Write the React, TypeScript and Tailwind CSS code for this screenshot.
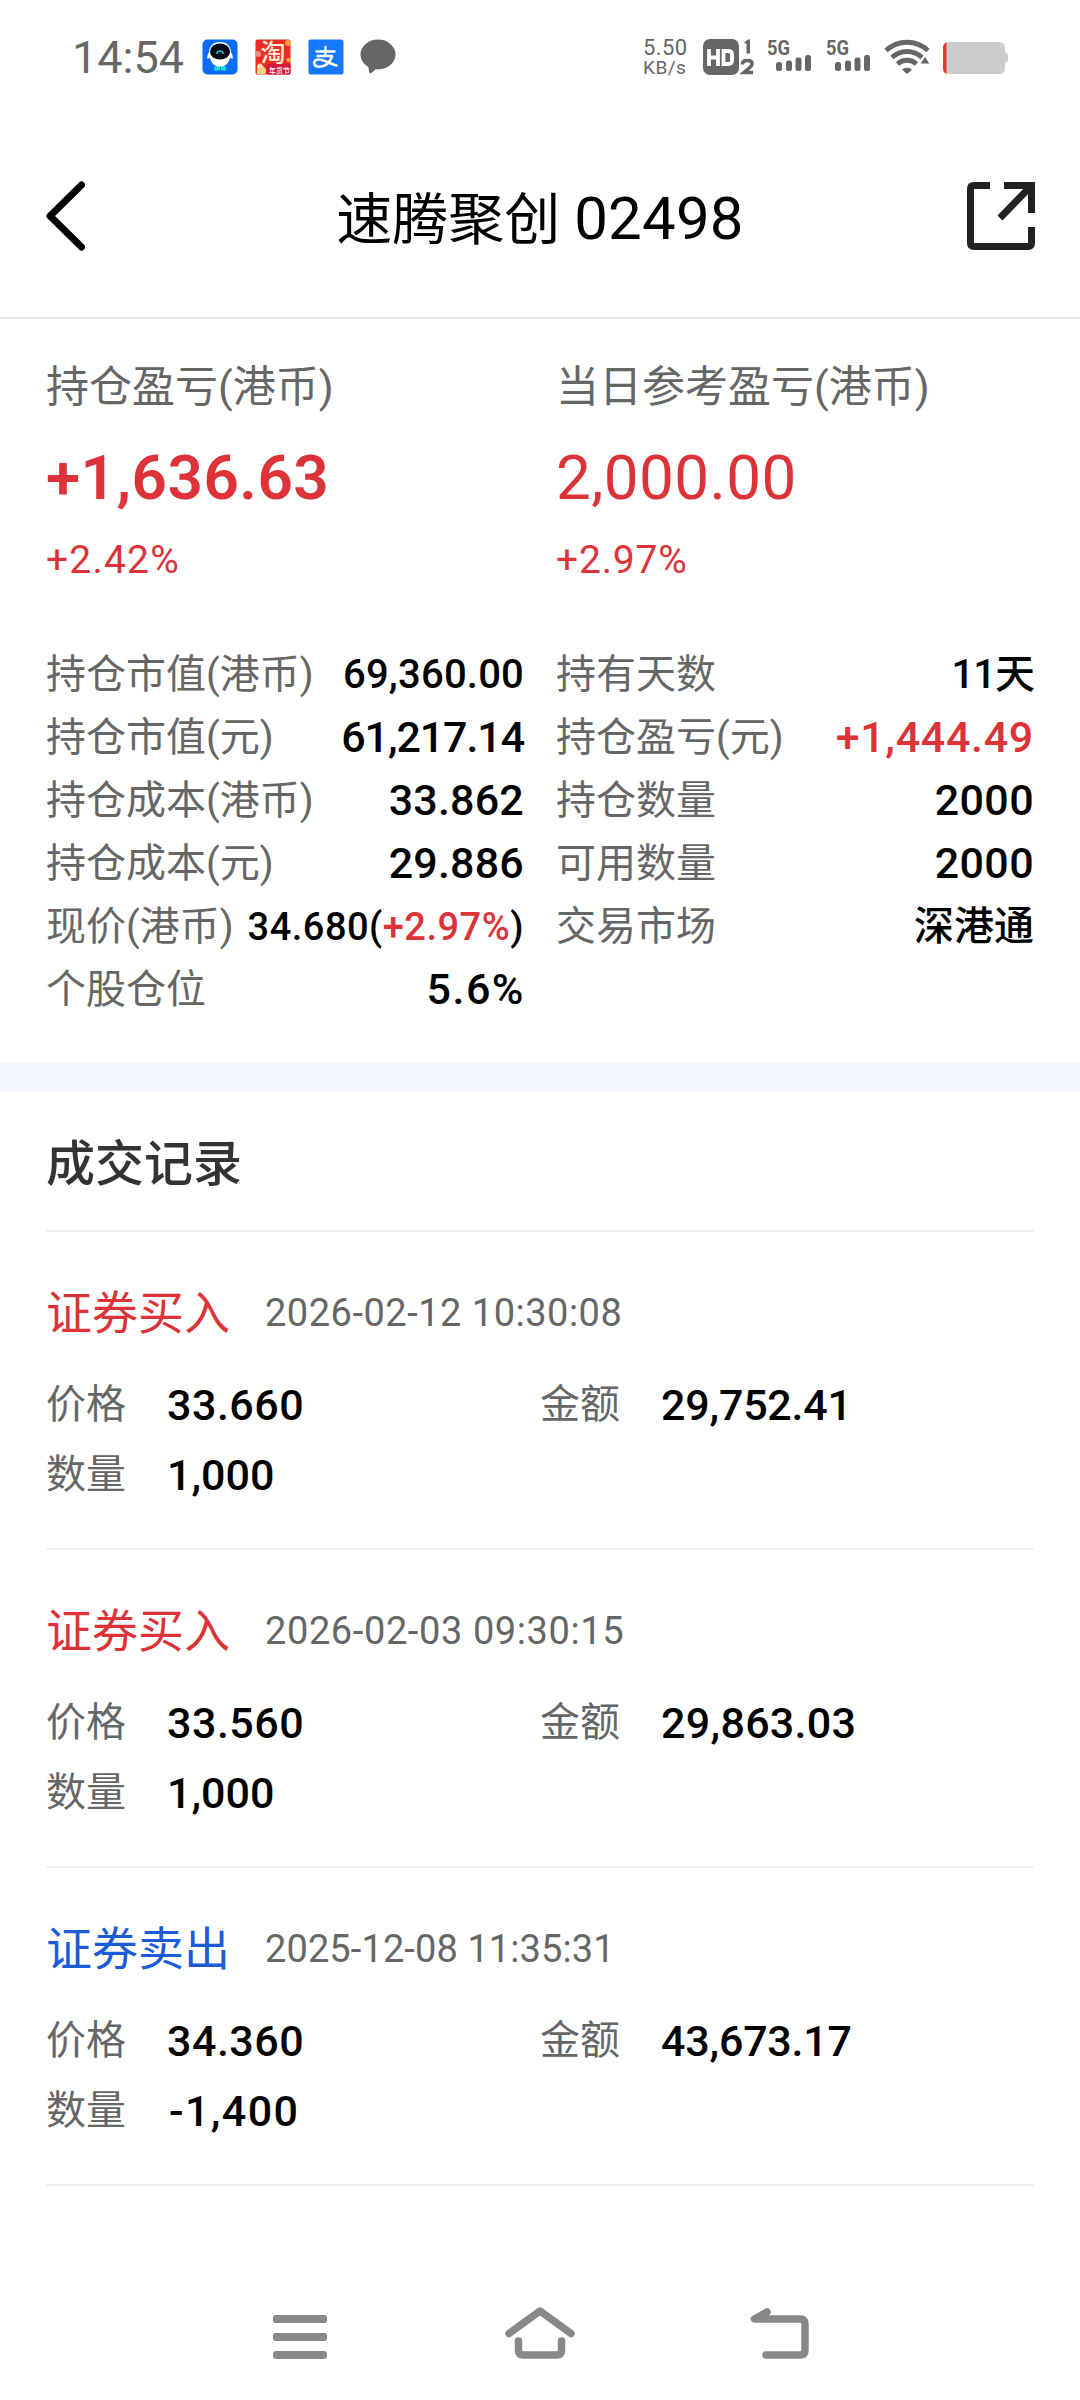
import clsx from 'clsx';

interface DetailItem {
  label: string;
  value: string;
  change?: string;
  className?: string;
}

interface TradeRecord {
  type: 'buy' | 'sell';
  time: string;
  timeClass: string;
  price: string;
  amount: string;
  amountClass?: string;
  quantity: string;
  quantityClass?: string;
}

const leftDetails: DetailItem[] = [
  { label: '持仓市值(港币)', value: '69,360.00', className: 'text-[40px] tracking-[0.2px]' },
  { label: '持仓市值(元)', value: '61,217.14', className: 'text-[43px] tracking-[-1.1px]' },
  { label: '持仓成本(港币)', value: '33.862', className: 'text-[43px] tracking-[0.2px]' },
  { label: '持仓成本(元)', value: '29.886', className: 'text-[43px] tracking-[0.2px]' },
  { label: '现价(港币)', value: '34.680', change: '+2.97%', className: 'text-[38px] tracking-[0.5px]' },
  { label: '个股仓位', value: '5.6%', className: 'text-[43px] tracking-[1.5px] -mr-[1px]' },
];

const rightDetails: DetailItem[] = [
  { label: '持有天数', value: '11天', className: 'text-[40px] tracking-[-1px]' },
  { label: '持仓盈亏(元)', value: '+1,444.49', className: 'text-[43px] tracking-[0.7px] text-[#dc3238]' },
  { label: '持仓数量', value: '2000', className: 'text-[43px] tracking-[0.4px]' },
  { label: '可用数量', value: '2000', className: 'text-[43px] tracking-[0.4px]' },
  { label: '交易市场', value: '深港通', className: 'text-[40px]' },
];

const records: TradeRecord[] = [
  {
    type: 'buy',
    time: '2026-02-12 10:30:08',
    timeClass: 'tracking-[0.5px]',
    price: '33.660',
    amount: '29,752.41',
    amountClass: 'tracking-[-0.2px]',
    quantity: '1,000',
  },
  {
    type: 'buy',
    time: '2026-02-03 09:30:15',
    timeClass: 'tracking-[0.6px]',
    price: '33.560',
    amount: '29,863.03',
    amountClass: 'tracking-[0.3px]',
    quantity: '1,000',
  },
  {
    type: 'sell',
    time: '2025-12-08 11:35:31',
    timeClass: 'tracking-[0.1px]',
    price: '34.360',
    amount: '43,673.17',
    amountClass: 'tracking-[-0.2px]',
    quantity: '-1,400',
    quantityClass: 'tracking-[1.4px] pl-[2px]',
  },
];

function SignalIcon() {
  return (
    <svg width="45" height="36" viewBox="0 0 45 36" fill="#666">
      <text x="0" y="16" fontSize="20" fontWeight="700" textLength="23" lengthAdjust="spacingAndGlyphs">
        5G
      </text>
      <rect x="9" y="23" width="6" height="9" rx="2.5" />
      <rect x="19" y="21.5" width="6" height="10.5" rx="2.5" />
      <rect x="28.5" y="18.5" width="6" height="13.5" rx="2.5" />
      <rect x="38" y="16" width="6" height="16" rx="2.5" />
    </svg>
  );
}

/**
 * Status bar: clock, app notifications, network and battery
 */
function StatusBar() {
  return (
    <div className="flex h-[114px] items-center pr-[72px] pl-[72px] text-[#666]">
      <span className="w-[130px] text-[45px] leading-none">14:54</span>
      <div className="flex flex-1 gap-[17px]">
        {/* QQ */}
        <svg width="36" height="36" viewBox="0 0 36 36">
          <rect x="0.5" y="0.5" width="35" height="35" rx="5" fill="#0a6cfb" />
          <path d="M13 27h5v4.500h-6c0-2 .5-3 1-4.500zM19 27h4c.6.6 1 2.600 1 4.500h-5z" fill="#10e0d0" />
          <path d="M18 3c7 0 10.500 4 11 10 1.600 2.500 2 5 1.600 7l-2.600-1c-1.500 6-5 8.500-10 8.500S9.500 25 8 19l-2.600 1c-.4-2 0-4.500 1.600-7 .5-6 4-10 11-10z" fill="#fff" />
          <ellipse cx="18" cy="12.500" rx="10" ry="8" fill="#050a18" />
          <path d="M14.800 15c.4-4 6-4 6.400 0" stroke="#18c9c9" strokeWidth="1.5" fill="none" />
        </svg>
        {/* Taobao */}
        <svg width="36" height="36" viewBox="0 0 36 36">
          <rect x="0.5" y="0.5" width="35" height="35" rx="2" fill="#ee2b22" />
          <circle cx="3" cy="15" r="3" fill="#f98f7d" />
          <circle cx="33" cy="4" r="3" fill="#f9a04c" />
          <circle cx="33.5" cy="21" r="2" fill="#f9b04c" />
          <text x="5.5" y="22.5" fontSize="25" fontWeight="500" fill="#fff1d6">淘</text>
          <rect x="12" y="25" width="23.5" height="10.5" rx="1" fill="#d9143c" />
          <text x="14" y="34" fontSize="7" fontWeight="500" fill="#fff">年货节</text>
          <path d="M2 27c2-3 5-1 7 1s3 4 1 7H2z" fill="#f8cf8d" />
          <circle cx="5" cy="27" r="2.5" fill="#fbe3b6" />
        </svg>
        {/* Alipay */}
        <svg width="36" height="36" viewBox="0 0 36 36">
          <rect x="0.5" y="0.5" width="35" height="35" rx="2" fill="#1677ff" />
          <g fill="none" stroke="#fff" strokeLinecap="round">
            <path d="M8.500 12.500h18M17.500 8v9M9.500 17h14.500" strokeWidth="2.300" />
            <path d="M24 17.500c-2.500 7-7.500 10.200-12.500 10.200-3 0-5.300-1.200-5.300-3.700 0-2.300 2-3.500 4.600-3.500 6 0 10.200 4.300 17.700 6" strokeWidth="2.600" />
          </g>
        </svg>
        <svg width="36" height="36" viewBox="0 0 36 36" fill="#666" className="-ml-[1px]">
          <ellipse cx="18" cy="15.500" rx="17.500" ry="15" />
          <path d="M8 26.500l1.500 8c3-1 5-2.500 6.500-5z" />
        </svg>
      </div>
      <div className="flex items-center">
        <div className="mr-[14px] flex w-[46px] flex-col">
          <span className="text-[22px] leading-[20px] tracking-[0.4px]">5.50</span>
          <span className="text-[19px] leading-[19px] tracking-[0.5px]">KB/s</span>
        </div>
        <svg width="51" height="36" viewBox="0 0 51 36" fill="#666" className="mr-[13px]">
          <rect width="36" height="36" rx="7" />
          <g fill="none" stroke="#fff" strokeWidth="3.800">
            <path d="M6 10v17M15 10v17M6 18.500h9" />
            <path d="M20.500 12h5c2.500 0 3.500 1.200 3.500 3.500v6c0 2.300-1 3.500-3.500 3.500h-5z" />
          </g>
          <path d="M41.500 3.200L45 .5h2v14h-3.500V4.500h-2z" />
          <path d="M39.500 25.500v-.5q0-3.500 4.800-3.500t4.800 3.300q0 1.800-1.800 3.200L41 33.500h9" fill="none" stroke="#666" strokeWidth="3.500" />
        </svg>
        <SignalIcon />
        <div className="w-[14px]" />
        <SignalIcon />
        {/* Wi-Fi */}
        <svg width="46" height="36" viewBox="0 0 46 36" className="ml-[13px]">
          <g fill="none" stroke="#666" strokeWidth="4.800">
            <path d="M2 11.500C14 .5 32 .5 44 11.500" />
            <path d="M8 18.500c8.500-8 21.500-8 30 0" />
            <path d="M13.500 25c5.500-5 13.500-5 19 0" />
          </g>
          <path d="M18 30.500c3-2.500 7-2.500 10 0L23 35z" fill="#666" />
          <path d="M41 17l5 8h-10z" fill="#666" stroke="#fff" strokeWidth="1" />
        </svg>
        <svg width="66" height="34" viewBox="0 0 66 34" className="mt-[2px] ml-[13px] -mr-[1px]">
          <path d="M60 11h2q3 1 3 4v3q0 3-3 4h-2z" fill="#ccc" />
          <path d="M6 1h50q6 0 6 6v20q0 6-6 6H6q-6 0-6-6V7q0-6 6-6z" fill="#ccc" />
          <path d="M3.500 1.500v31Q0 32 0 27V7Q0 2.500 3.500 1.500z" fill="#e8392f" />
        </svg>
      </div>
    </div>
  );
}

function Header() {
  return (
    <div className="flex h-[205px] items-center justify-between border-b-2 border-[#e5e5e5] px-[44px]">
      <svg width="70" height="72" viewBox="0 0 70 72" fill="none">
        <path d="M37.500 5L6 36l31.500 31" stroke="#000" strokeWidth="7" strokeLinecap="round" strokeLinejoin="round" />
      </svg>
      <h1 className="pt-[6px] text-[56px] leading-none text-black">
        速腾聚创 <span className="text-[60px] tracking-[0.2px]">02498</span>
      </h1>
      <svg width="70" height="70" viewBox="0 0 70 70" fill="none" stroke="#222" strokeWidth="7">
        <path d="M24 4.500H8q-3.500 0-3.500 3.500v54q0 3.500 3.500 3.500h54q3.500 0 3.500-3.500V46" />
        <path d="M38 4.500h27.500V32M64 6L34 37" />
      </svg>
    </div>
  );
}

function DetailRow({ label, value, change, className }: DetailItem) {
  return (
    <div className="flex h-[63px] items-center justify-between whitespace-nowrap">
      <span className="text-[40px] leading-none text-[#666]">{label}</span>
      <span className={clsx('leading-none font-medium', className)}>
        {value}
        {change && (
          <>
            (<span className="text-[#dc3238]">{change}</span>)
          </>
        )}
      </span>
    </div>
  );
}

function Summary() {
  return (
    <section className="px-[46px] pt-[38px] pb-[42px]">
      <div className="grid grid-cols-2 gap-x-[32px]">
        <div>
          <div className="text-[43px] leading-[60px] text-[#666]">持仓盈亏(港币)</div>
          <div className="text-[62px] leading-[122px] font-semibold tracking-[0.5px] text-[#dc3238]">+1,636.63</div>
          <div className="text-[39px] leading-[42px] tracking-[1.2px] text-[#dc3238]">+2.42%</div>
        </div>
        <div>
          <div className="text-[43px] leading-[60px] text-[#666]">当日参考盈亏(港币)</div>
          <div className="text-[62px] leading-[122px] tracking-[0.4px] text-[#dc3238]">2,000.00</div>
          <div className="text-[39px] leading-[42px] tracking-[0.8px] text-[#dc3238]">+2.97%</div>
        </div>
      </div>
      <div className="mt-[62px] grid grid-cols-2 gap-x-[32px]">
        <div>
          {leftDetails.map((item) => (
            <DetailRow key={item.label} {...item} />
          ))}
        </div>
        <div>
          {rightDetails.map((item) => (
            <DetailRow key={item.label} {...item} />
          ))}
        </div>
      </div>
    </section>
  );
}

function RecordField({ label, value, className }: { label: string; value: string; className?: string }) {
  return (
    <div className="flex h-[70px] items-center">
      <span className="w-[121px] text-[40px] leading-none text-[#666]">{label}</span>
      <span className={clsx('text-[43px] leading-none font-medium', className)}>{value}</span>
    </div>
  );
}

function Record({ record }: { record: TradeRecord }) {
  const isBuy = record.type === 'buy';

  return (
    <div className="h-[318px] border-b-2 border-[#f0f0f0] pt-[51px]">
      <div className="flex h-[60px] items-center">
        <span className={clsx('w-[219px] text-[46px] leading-none', isBuy ? 'text-[#dc3238]' : 'text-[#1c5bd8]')}>
          {isBuy ? '证券买入' : '证券卖出'}
        </span>
        <span className={clsx('text-[38px] leading-none text-[#666]', record.timeClass)}>{record.time}</span>
      </div>
      <div className="mt-[27px] grid grid-cols-2">
        <RecordField label="价格" value={record.price} className="tracking-[0.5px]" />
        <RecordField label="金额" value={record.amount} className={record.amountClass} />
        <RecordField label="数量" value={record.quantity} className={record.quantityClass} />
      </div>
    </div>
  );
}

function NavBar() {
  return (
    <div className="flex h-[128px] items-center justify-center gap-[160px] pb-[4px]">
      <svg width="80" height="60" viewBox="0 0 80 60" fill="#888">
        <rect x="13" y="11" width="54" height="8" rx="3" />
        <rect x="13" y="29" width="54" height="8" rx="3" />
        <rect x="13" y="47" width="54" height="8" rx="3" />
      </svg>
      <svg width="80" height="60" viewBox="0 0 80 60" fill="none" stroke="#888" strokeWidth="7.5" strokeLinecap="round" strokeLinejoin="round">
        <path d="M9 29.500L40 7l31 22.500" />
        <path d="M18.500 37v9q0 5 5 5h33q5 0 5-5v-9" />
      </svg>
      <svg width="80" height="60" viewBox="0 0 80 60" fill="none" stroke="#888" strokeWidth="7.5" strokeLinecap="round" strokeLinejoin="round">
        <path d="M27 8L14.500 15H60q5 0 5 5v26q0 5-5 5H26" />
      </svg>
    </div>
  );
}

export default function App() {
  return (
    <div className="flex h-[2400px] w-[1080px] flex-col overflow-hidden bg-white font-['Roboto','Noto_Sans_CJK_SC',sans-serif] text-black">
      <StatusBar />
      <Header />
      <Summary />
      <div className="h-[29px] bg-[#f3f6fd]" />
      <section className="flex-1 px-[46px]">
        <h2 className="h-[138px] pt-[4px] text-[49px] leading-[138px] font-medium text-[#333]">成交记录</h2>
        <div className="border-t-2 border-[#f0f0f0]">
          {records.map((record) => (
            <Record key={record.time} record={record} />
          ))}
        </div>
      </section>
      <NavBar />
    </div>
  );
}
